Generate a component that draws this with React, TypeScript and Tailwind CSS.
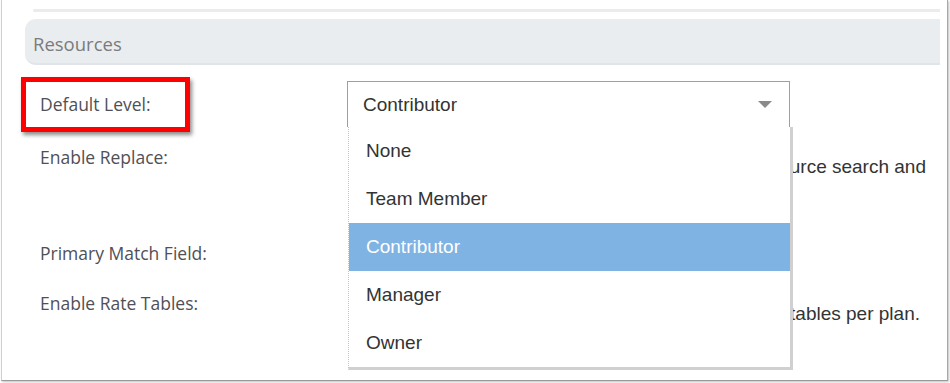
import React from 'react';

const options = ['None', 'Team Member', 'Contributor', 'Manager', 'Owner'];

const labelCls = "font-['Open_Sans',sans-serif] text-[17.5px] leading-[24px] text-[#505056]";
const valueCls = "font-['Liberation_Sans',Arial,sans-serif] text-[19px] leading-[22px] text-[#333]";

const App: React.FC = () => {
  const selected = 'Contributor';

  return (
    <div className="w-[950px] h-[383px] bg-white overflow-hidden">
      <div className="ml-[1px] w-[947px] h-[381px] bg-white border-l border-r border-b border-l-[#cfcfcf] border-r-[#a8a8a8] border-b-[#9a9a9a] shadow-[1px_1px_2px_rgba(0,0,0,0.25)]">
        {/* Top divider */}
        <div className="pt-[9px] pl-[31px] pr-[7px]">
          <div className="h-[3px] bg-[#ebebeb] rounded-l-sm" />
        </div>

        {/* Section header */}
        <div className="mt-[7px] ml-[23px] mr-[7px] h-[46px] flex items-center pl-[8px] pt-[5px] bg-[#e9edf0] border-b-2 border-[#e2e5e8] rounded-l-[11px]">
          <span className="font-['Open_Sans',sans-serif] text-[18.5px] text-[#7b7b7b]">Resources</span>
        </div>

        {/* Form */}
        <div className="mt-[16px]">
          {/* Default Level */}
          <div className="relative flex h-[46px]">
            <div className="w-[345px] pl-[38px] flex items-center">
              <span className={labelCls}>Default Level:</span>
            </div>
            <div className="relative w-[443px]">
              <div className="h-[46px] flex items-center justify-between pl-[15px] pr-[17px] border-t border-l border-r border-[#7aa7d8] bg-white">
                <span className={valueCls}>{selected}</span>
                <svg width="14" height="7" viewBox="0 0 14 7"><path d="M0 0H14L7 7Z" fill="#8a8a8a" /></svg>
              </div>

              {/* Open list */}
              <div className="absolute left-[1px] top-full z-20 w-[445px] bg-white border-l border-r-[3px] border-b-[3px] border-l-[#c4c4c4] border-r-[#d0d0d0] border-b-[#d0d0d0] [border-style:solid_solid_solid_dotted]">
                {options.map((o) => (
                  <div
                    key={o}
                    className={`h-[48px] flex items-center pl-[17px] ${o === selected ? 'bg-[#7fb3e3]' : 'bg-white'}`}
                  >
                    <span className={`${valueCls} ${o === selected ? '!text-white' : ''}`}>{o}</span>
                  </div>
                ))}
              </div>
            </div>

            {/* Highlight annotation */}
            <div className="absolute left-[19px] top-[-4px] w-[169px] h-[55px] border-[5px] border-[#ff0000] shadow-[2px_3px_4px_rgba(0,0,0,0.45)] pointer-events-none" />
          </div>

          {/* Enable Replace */}
          <div className="mt-[18px] flex h-[96px]">
            <div className="w-[345px] pl-[38px]">
              <span className={labelCls}>Enable Replace:</span>
            </div>
            <div className="w-[579px] pt-[11px] text-right">
              <div className={`${valueCls} whitespace-nowrap`}>Replace a resource on a task using the resource search and</div>
            </div>
          </div>

          {/* Primary Match Field */}
          <div className="flex h-[50px]">
            <div className="w-[345px] pl-[38px]">
              <span className={labelCls}>Primary Match Field:</span>
            </div>
          </div>

          {/* Enable Rate Tables */}
          <div className="flex">
            <div className="w-[345px] pl-[38px]">
              <span className={labelCls}>Enable Rate Tables:</span>
            </div>
            <div className="w-[573px] pt-[12px] text-right">
              <div className={`${valueCls} whitespace-nowrap`}>Allows the use of multiple rate tables per plan.</div>
            </div>
          </div>
        </div>
      </div>
    </div>
  );
};

export default App;
